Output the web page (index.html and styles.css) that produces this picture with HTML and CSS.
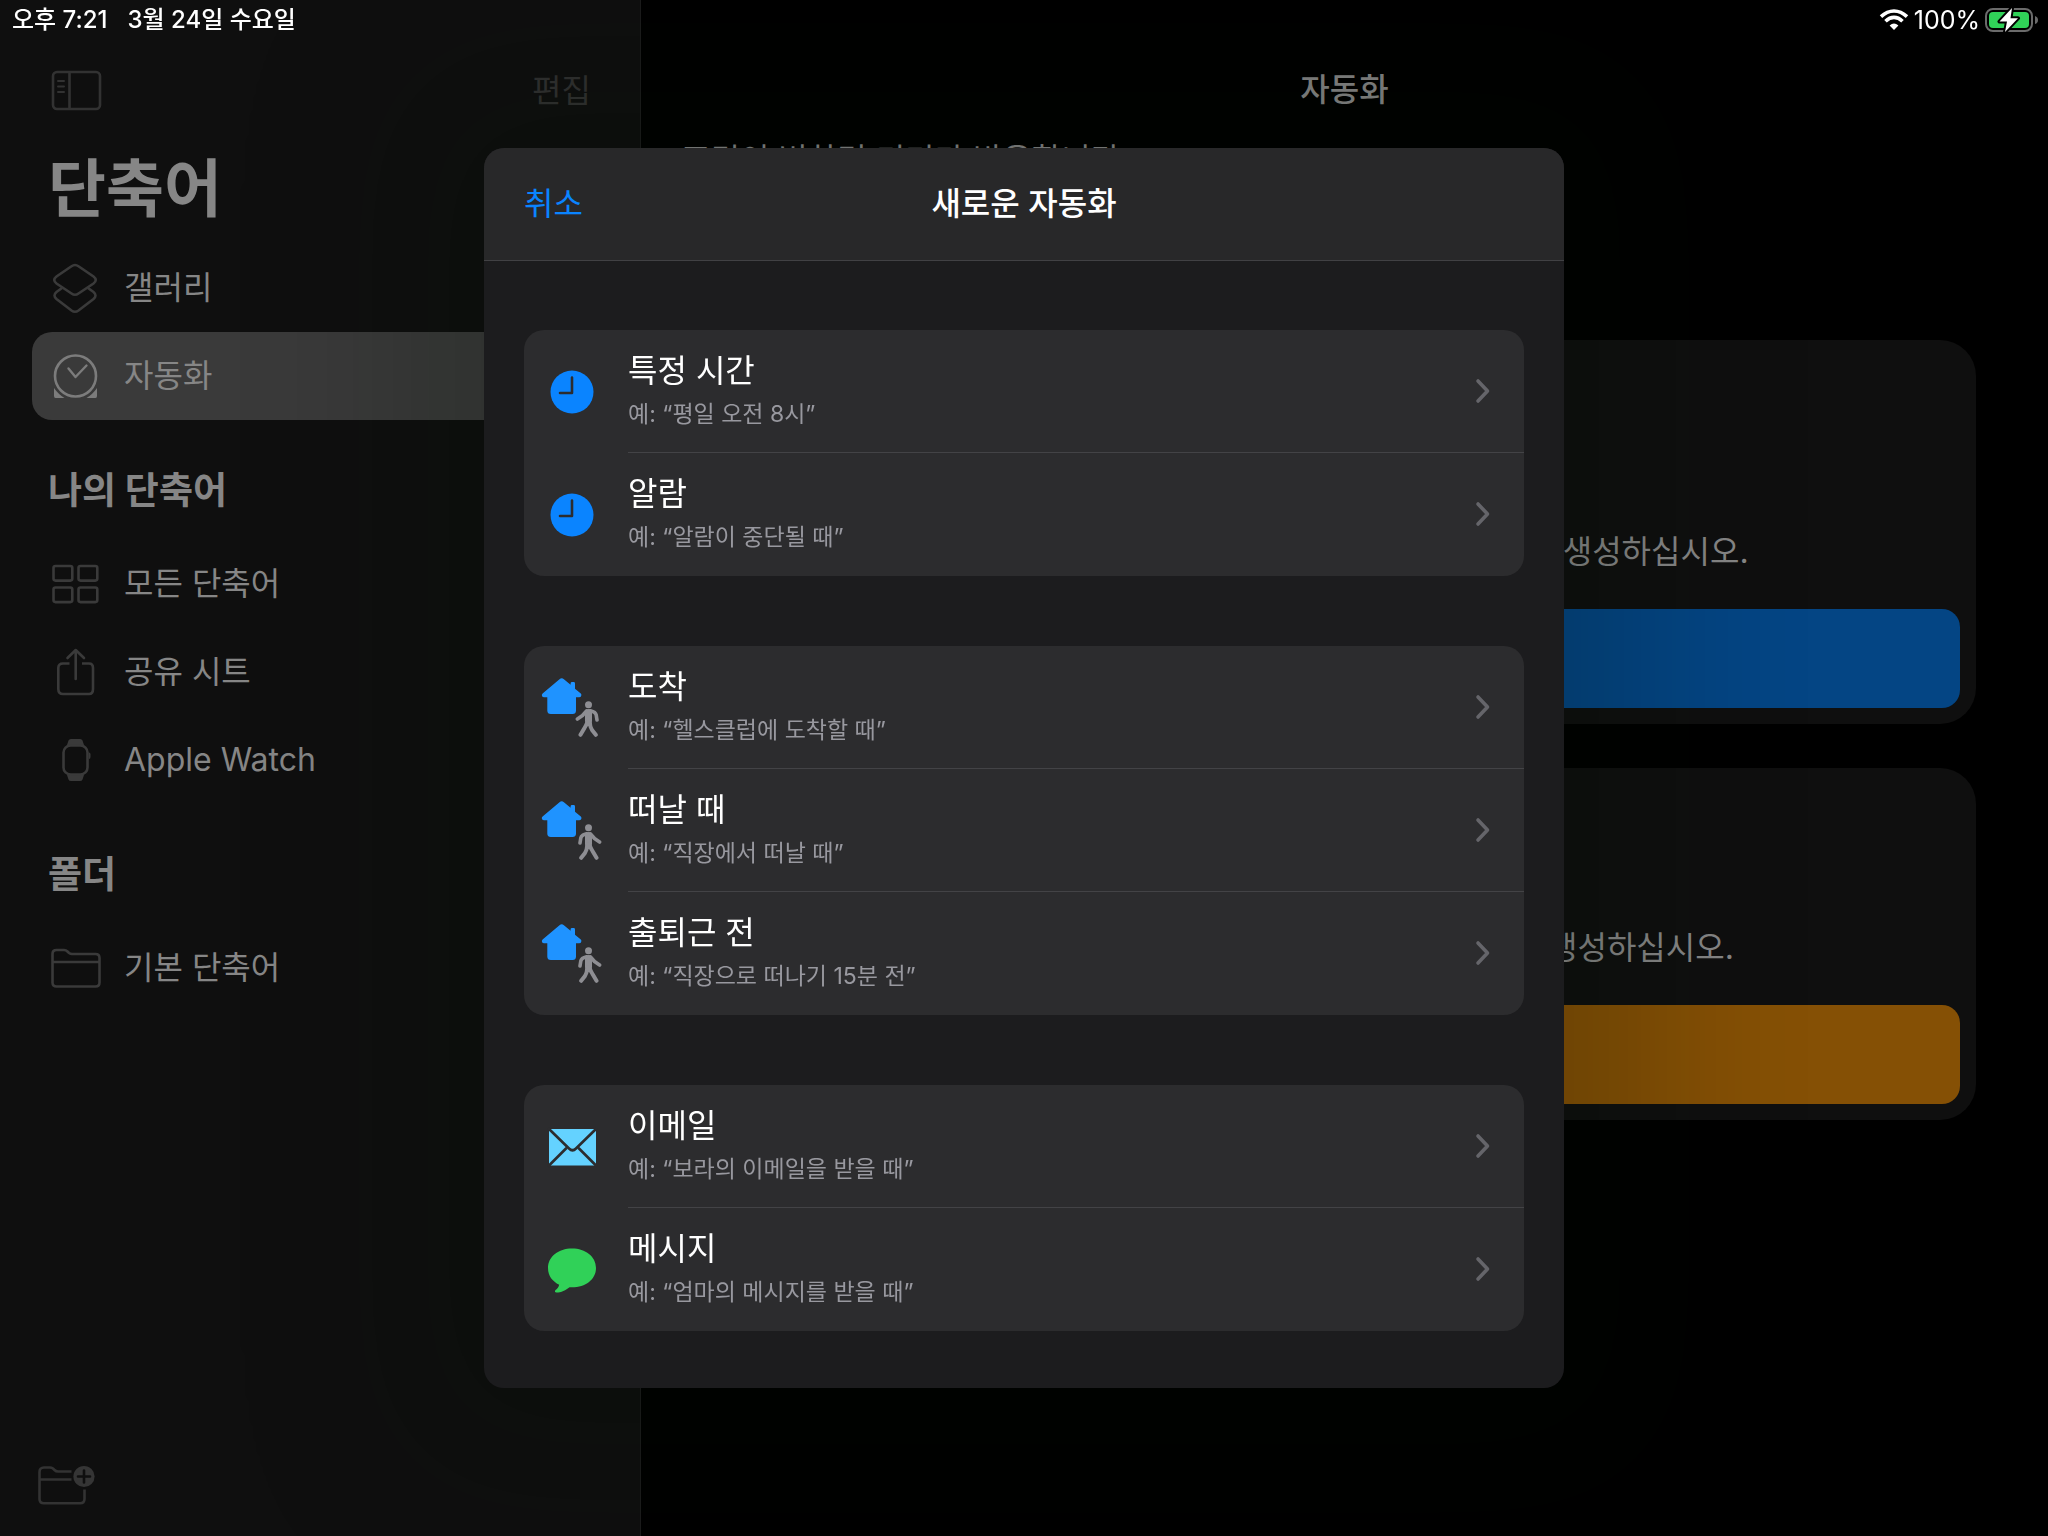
FILE: index.html
```html
<!DOCTYPE html>
<html lang="ko">
<head>
<meta charset="utf-8">
<meta name="viewport" content="width=device-width, initial-scale=1">
<title>단축어</title>
<link rel="stylesheet" href="styles.css">
</head>
<body>

<!-- shared icons -->
<svg class="defs" aria-hidden="true">
  <symbol id="clock" viewBox="0 0 64 64">
    <circle cx="32" cy="32" r="21.5" fill="#0a84ff"/>
    <path d="M32 17.5V33H20" fill="none" stroke="#2c2c2e" stroke-width="2.6" stroke-linecap="round" stroke-linejoin="round"/>
  </symbol>
  <symbol id="house" viewBox="0 0 64 64">
    <path fill="#1f93ff" d="M19.5 3.2Q21.7 1.200 23.9 3.200L30.600 8.800V7.400Q30.600 6 32 6H33.700Q35 6 35 7.400V12.700L40.800 17.500Q42 18.800 41 20.400Q40.400 21.200 39.200 21.200H36V34.500Q36 38 32.500 38H10.800Q7.300 38 7.300 34.500V21.200H4.100Q2.700 21.200 2.100 20.200Q1.300 18.700 2.600 17.500Z"/>
  </symbol>
  <symbol id="walker" viewBox="0 0 24 36">
    <circle cx="10.500" cy="3.700" r="3.500" fill="#8e8e93"/>
    <g fill="none" stroke="#8e8e93" stroke-linecap="round" stroke-linejoin="round">
      <path stroke-width="7" d="M10.500 11.500V19.500"/>
      <path stroke-width="3.600" d="M8.500 9.800Q3.500 11 2.800 14L2 19M12.500 9.800L16.500 14.500L21.600 18"/>
      <path stroke-width="4" d="M9.300 20.500Q9 26 7 29L3.200 33.800M11.500 20.500Q12.500 24 14.500 27L18.500 33.800"/>
    </g>
  </symbol>
  <symbol id="arrive" viewBox="0 0 64 64">
    <use href="#house" width="64" height="64"/>
    <use href="#walker" width="24" height="36" transform="translate(59 25) scale(-1 1)"/>
  </symbol>
  <symbol id="leave" viewBox="0 0 64 64">
    <use href="#house" width="64" height="64"/>
    <use href="#walker" x="38" y="25" width="24" height="36"/>
  </symbol>
  <symbol id="mail" viewBox="0 0 64 64">
    <rect x="9" y="14" width="47" height="36.500" rx="2" fill="#64d2ff"/>
    <path d="M8 13L29 33.500Q32.500 37 36 33.500L57 13M8 51.500L26.500 33M57 51.500L38.500 33" fill="none" stroke="#2c2c2e" stroke-width="2.600"/>
  </symbol>
  <symbol id="message" viewBox="0 0 64 64">
    <path fill="#30d158" d="M32 10.500C45.500 10.500 56 18.500 56 30S45.500 49.300 32 49.300L29.500 49.200C26 52 21 54.500 16.500 54.600C14.800 54.600 14.500 53.200 15.600 52.100C17.300 50.400 18.800 49 19.200 46.700C12.500 43.500 8 38 8 30C8 18.500 18.500 10.500 32 10.500Z"/>
  </symbol>
  <symbol id="chevron" viewBox="0 0 16 26">
    <path d="M3 3L12.500 13L3 23" fill="none" stroke="#65656a" stroke-width="3.600" stroke-linecap="round" stroke-linejoin="round"/>
  </symbol>
</svg>

<div class="status">
  <span>오후 7:21</span>
  <span>3월 24일 수요일</span>
  <div class="status-right">
    <svg width="30" height="22" viewBox="0 0 30 22" aria-hidden="true">
      <g fill="none" stroke="#fff" stroke-width="3.600">
        <path d="M2 7.600Q8 2 15 2T28 7.600"/>
        <path d="M6.500 12.300Q10.500 8.400 15 8.400T23.500 12.300"/>
      </g>
      <path d="M10.600 16.600Q15 12.600 19.400 16.600L15 21Z" fill="#fff"/>
    </svg>
    <span>100%</span>
    <svg width="54" height="26" viewBox="0 0 54 26" aria-hidden="true">
      <rect x="1" y="2" width="46" height="22" rx="7" fill="none" stroke="#6b6b6b" stroke-width="2"/>
      <path d="M50 9Q53 10 53 13T50 17Z" fill="#6b6b6b"/>
      <rect x="4" y="5" width="40" height="16" rx="4" fill="#30d158"/>
      <path d="M27 1L14.500 14.500H22L20 25L33 11.200H25.500Z" fill="#fff" stroke="#000" stroke-width="4" stroke-linejoin="round" paint-order="stroke"/>
    </svg>
  </div>
</div>

<div class="app">
  <nav class="sidebar">
    <div class="toolbar">
      <button class="tool" aria-label="사이드바">
        <svg width="52" height="42" viewBox="0 0 52 42">
          <g fill="none" stroke="#323232" stroke-width="2.600">
            <rect x="2" y="2" width="47" height="37" rx="4"/>
            <path d="M18.500 2V39"/>
            <path d="M7 11H13M7 16.500H13M7 22H13" stroke-width="2" stroke-linecap="round"/>
          </g>
        </svg>
      </button>
      <button class="tool edit">편집</button>
    </div>

    <h1>단축어</h1>
    <a class="item" href="#gallery">
      <svg width="50" height="52" viewBox="0 0 50 52" fill="none" stroke="#3a3a3a" stroke-width="2.600">
        <path d="M20.500 4.300Q24 1.700 27.500 4.300L42.500 14.500Q47 18 42.500 21.500L27.500 31.500Q24 34 20.500 31.500L5.500 21.500Q1 18 5.500 14.500Z"/>
        <path d="M11 26L5.500 30Q1.500 33.500 5.500 37L20.500 48.500Q24 51 27.500 48.500L42.500 37Q46.500 33.500 42.500 30L37 26"/>
      </svg>
      갤러리
    </a>
    <a class="item selected" href="#automation">
      <svg width="50" height="52" viewBox="0 0 50 52">
        <circle cx="24.500" cy="26" r="20.500" fill="none" stroke="#7c7c7c" stroke-width="2.600"/>
        <path d="M17.500 18.500L24.500 27L35.500 15.500" fill="none" stroke="#7c7c7c" stroke-width="2.400" stroke-linecap="round" stroke-linejoin="round"/>
        <path d="M3 38Q7.500 44.500 13.500 48H4.500Q3 48 3 46ZM46 38Q41.500 44.500 35.500 48H44.500Q46 48 46 46Z" fill="#7c7c7c"/>
      </svg>
      자동화
    </a>

    <h2>나의 단축어</h2>
    <a class="item" href="#all">
      <svg width="50" height="52" viewBox="0 0 50 52" fill="none" stroke="#3a3a3a" stroke-width="2.600">
        <rect x="2.500" y="8" width="18.800" height="14.600" rx="2"/>
        <rect x="27.500" y="8" width="18.800" height="14.600" rx="2"/>
        <rect x="2.500" y="29.500" width="18.800" height="14.600" rx="2"/>
        <rect x="27.500" y="29.500" width="18.800" height="14.600" rx="2"/>
      </svg>
      모든 단축어
    </a>
    <a class="item" href="#share">
      <svg width="50" height="52" viewBox="0 0 50 52" fill="none" stroke="#3a3a3a" stroke-width="2.600">
        <path d="M18.500 17.500H12Q7.300 17.500 7.300 22V43Q7.300 48 12 48H38Q42 48 42 43V22Q42 17.500 38 17.500H31"/>
        <path d="M24.700 33V4.500M16.500 12L24.700 4L33 12" stroke-linecap="round" stroke-linejoin="round"/>
      </svg>
      공유 시트
    </a>
    <a class="item" href="#watch">
      <svg width="50" height="52" viewBox="0 0 50 52">
        <path d="M16 11L17.500 6.500Q18 5 20 5H29Q31 5 31.500 6.500L33 11ZM16 41L17.500 45.500Q18 47 20 47H29Q31 47 31.500 45.500L33 41Z" fill="#3a3a3a"/>
        <rect x="12.500" y="11.500" width="24" height="29" rx="7" fill="#0f0f0f" stroke="#3a3a3a" stroke-width="2.600"/>
        <path d="M38 18.500Q39.500 18.500 39.500 20.500V23Q39.500 25 38 25Z" fill="#3a3a3a"/>
      </svg>
      Apple Watch
    </a>

    <h2>폴더</h2>
    <a class="item" href="#folder">
      <svg width="50" height="52" viewBox="0 0 50 52" fill="none" stroke="#3a3a3a" stroke-width="2.600">
        <path d="M1.500 12Q1.500 8 5.500 8H13Q15 8 16.500 9.500L18 11Q19.500 12 21 12H44.500Q48.500 12 48.500 16V40.500Q48.500 44.500 44.500 44.500H5.500Q1.500 44.500 1.500 40.500ZM1.500 20H48.500"/>
      </svg>
      기본 단축어
    </a>

    <button class="tool new-folder" aria-label="새로운 폴더">
      <svg width="60" height="42" viewBox="0 0 60 42">
        <g fill="none" stroke="#333" stroke-width="2.600">
          <path d="M34.500 7.500H21Q19 7.500 17.500 6L16 4.500Q14.500 3.500 13 3.500H7Q2.500 3.500 2.500 8V35Q2.500 39.300 7 39.300H43Q47.500 39.300 47.500 35V25.500"/>
          <path d="M2.500 15.500H34.500"/>
        </g>
        <circle cx="47" cy="12.500" r="10.600" fill="#353535"/>
        <path d="M47 6.500V18.500M41 12.500H53" stroke="#0f0f0f" stroke-width="2.600" stroke-linecap="round"/>
      </svg>
    </button>
  </nav>

  <main class="content">
    <div class="content-title">자동화</div>
    <p class="intro">조건이 변하면 기기가 반응합니다</p>
    <section class="card personal">
      <p>이 기기에서 나를 위해 동작하는 개인 자동화를 생성하십시오.</p>
      <button class="create" aria-label="개인용 자동화 생성"></button>
    </section>
    <section class="card home">
      <p>집에 있는 모두를 위해 실행되는 홈 자동화를 생성하십시오.</p>
      <button class="create" aria-label="홈 자동화 생성"></button>
    </section>
  </main>
</div>

<div class="overlay">
  <div class="sheet" role="dialog" aria-labelledby="sheet-title">
    <header class="sheet-head">
      <button class="cancel">취소</button>
      <div class="sheet-title" id="sheet-title">새로운 자동화</div>
    </header>
    <div class="sheet-body">
      <div class="group">
        <button class="row">
          <svg class="row-icon"><use href="#clock"/></svg>
          <span class="row-main">
            <span class="row-text"><span class="name">특정 시간</span><span class="hint">예: “평일 오전 8시”</span></span>
            <svg class="chevron"><use href="#chevron"/></svg>
          </span>
        </button>
        <button class="row">
          <svg class="row-icon"><use href="#clock"/></svg>
          <span class="row-main">
            <span class="row-text"><span class="name">알람</span><span class="hint">예: “알람이 중단될 때”</span></span>
            <svg class="chevron"><use href="#chevron"/></svg>
          </span>
        </button>
      </div>

      <div class="group">
        <button class="row">
          <svg class="row-icon"><use href="#arrive"/></svg>
          <span class="row-main">
            <span class="row-text"><span class="name">도착</span><span class="hint">예: “헬스클럽에 도착할 때”</span></span>
            <svg class="chevron"><use href="#chevron"/></svg>
          </span>
        </button>
        <button class="row">
          <svg class="row-icon"><use href="#leave"/></svg>
          <span class="row-main">
            <span class="row-text"><span class="name">떠날 때</span><span class="hint">예: “직장에서 떠날 때”</span></span>
            <svg class="chevron"><use href="#chevron"/></svg>
          </span>
        </button>
        <button class="row">
          <svg class="row-icon"><use href="#leave"/></svg>
          <span class="row-main">
            <span class="row-text"><span class="name">출퇴근 전</span><span class="hint">예: “직장으로 떠나기 15분 전”</span></span>
            <svg class="chevron"><use href="#chevron"/></svg>
          </span>
        </button>
      </div>

      <div class="group">
        <button class="row">
          <svg class="row-icon"><use href="#mail"/></svg>
          <span class="row-main">
            <span class="row-text"><span class="name">이메일</span><span class="hint">예: “보라의 이메일을 받을 때”</span></span>
            <svg class="chevron"><use href="#chevron"/></svg>
          </span>
        </button>
        <button class="row">
          <svg class="row-icon"><use href="#message"/></svg>
          <span class="row-main">
            <span class="row-text"><span class="name">메시지</span><span class="hint">예: “엄마의 메시지를 받을 때”</span></span>
            <svg class="chevron"><use href="#chevron"/></svg>
          </span>
        </button>
      </div>
    </div>
  </div>
</div>

</body>
</html>
```

FILE: styles.css
```css
* { box-sizing: border-box; }
body { margin: 0; background: #000; color: #868686; font-family: Inter, "Noto Sans CJK KR", sans-serif; font-size: 32px; line-height: 44px; }
h1, h2, p { margin: 0; }
button { margin: 0; padding: 0; border: 0; background: none; color: inherit; font: inherit; text-align: left; }
a { color: inherit; text-decoration: none; }
svg { display: block; flex: none; }
.defs { position: absolute; width: 0; height: 0; }

/* status bar */
.status { position: absolute; z-index: 1; top: 0; left: 0; right: 0; height: 40px; padding: 0 9px 0 12px; display: flex; align-items: center; gap: 20px; color: #fff; font-size: 24px; font-weight: 500; line-height: 40px; }
.status-right { margin-left: auto; display: flex; align-items: center; gap: 5px; font-size: 25px; font-weight: 400; }

.app { display: flex; min-height: 100vh; }

/* sidebar */
.sidebar { flex: none; width: 641px; padding: 40px 32px 30px; display: flex; flex-direction: column; background: #0f0f0f; border-right: 1px solid #1c1c1c; }
.toolbar { display: flex; align-items: center; justify-content: space-between; height: 101px; padding: 0 17px 0 19px; }
.tool { color: #323232; }
h1 { height: 103px; padding-left: 16px; font-size: 63px; line-height: 94px; }
h2 { height: 120px; padding: 49px 16px 0; font-size: 37px; line-height: 44px; }
.item { display: flex; align-items: center; gap: 23px; height: 88px; padding: 0 19px; border-radius: 20px; }
.selected { background: #3a3a3a; }
.new-folder { margin-top: auto; padding-left: 5px; }

/* content behind the sheet */
.content { flex: 1; padding: 66px 72px 0; }
.content-title { font-weight: 500; line-height: 48px; text-align: center; }
.intro { margin: 24px -32px 158px; }
.card { display: flex; flex-direction: column; justify-content: flex-end; gap: 35px; margin-bottom: 44px; padding: 16px; border-radius: 36px; background: #0f0f0f; text-align: center; }
.personal { height: 384px; }
.home { height: 352px; }
.create { height: 99px; border-radius: 18px; }
.personal .create { background: #044584; }
.home .create { background: #855005; }

/* sheet */
.overlay { position: fixed; inset: 0; display: grid; place-items: center; }
.sheet { width: 1080px; max-width: 100%; border-radius: 20px; background: #1c1c1e; box-shadow: 0 0 160px 90px rgba(0, 18, 0, .18); overflow: hidden; }
.sheet-head { display: grid; grid-template-columns: 1fr auto 1fr; align-items: center; height: 113px; padding: 0 40px; background: #282829; border-bottom: 1px solid #414144; }
.cancel { color: #0a84ff; }
.sheet-title { color: #fff; font-weight: 500; }
.sheet-body { display: grid; gap: 70px; padding: 69px 40px 57px; }
.group { border-radius: 20px; background: #2c2c2e; overflow: hidden; }
.row { display: flex; align-items: center; width: 100%; height: 123px; }
.row-icon { width: 64px; height: 64px; margin: 0 24px 0 16px; }
.row-main { flex: 1; display: flex; align-items: center; justify-content: space-between; height: 100%; padding-right: 33px; border-bottom: 1px solid #434346; }
.row:last-child .row-main { border-bottom-color: transparent; }
.row-text { display: flex; flex-direction: column; padding-top: 2px; }
.name { color: #fff; }
.hint { color: #98989f; font-size: 23px; line-height: 42px; }
.chevron { width: 16px; height: 26px; }
```
